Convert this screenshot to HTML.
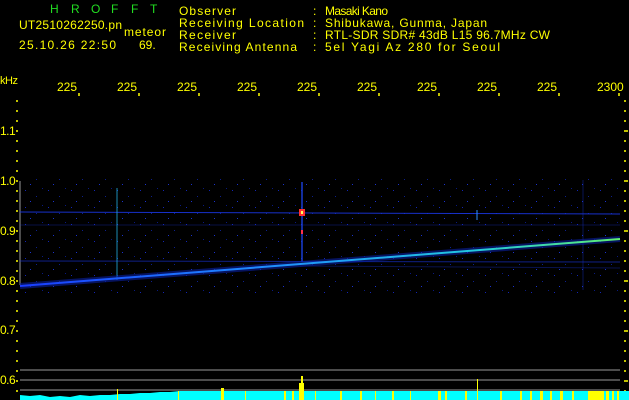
<!DOCTYPE html>
<html><head><meta charset="utf-8"><style>
html,body{margin:0;padding:0;background:#000;width:629px;height:400px;overflow:hidden}
svg{display:block}
text{font-family:"Liberation Sans","DejaVu Sans",sans-serif;font-size:12px}
.ax{font-size:11px;letter-spacing:-0.5px}
</style></head><body>
<svg width="629" height="400" viewBox="0 0 629 400">
<defs>
<linearGradient id="tr" x1="0" x2="1" y1="0" y2="0">
<stop offset="0" stop-color="#1a3cff"/><stop offset="0.4" stop-color="#1f8cff"/><stop offset="0.75" stop-color="#22c8e0"/><stop offset="1" stop-color="#60f070"/>
</linearGradient>
<pattern id="nz" width="23" height="17" patternUnits="userSpaceOnUse">
<rect x="2" y="3" width="1" height="1" fill="#1830e0"/><rect x="13" y="9" width="1" height="1" fill="#1028b0"/><rect x="7" y="14" width="1" height="1" fill="#2040ff"/><rect x="19" y="1" width="1" height="1" fill="#0c20a0"/>
</pattern>
</defs>
<rect width="629" height="400" fill="#000"/>
<g fill="#22dd22" font-size="14"><text x="50" y="13">H</text><text x="71" y="13">R</text><text x="91" y="13">O</text><text x="111" y="13">F</text><text x="131" y="13">F</text><text x="150" y="13">T</text></g>
<g fill="#ffff00">
<text x="19" y="29" textLength="103">UT2510262250.pn</text><text x="124" y="36" textLength="42">meteor</text>
<text x="19" y="49" textLength="97">25.10.26 22:50</text><text x="139" y="49">69.</text>
<text x="179" y="15" textLength="57">Observer</text><text x="179" y="27" textLength="125">Receiving Location</text><text x="179" y="39" textLength="57">Receiver</text><text x="179" y="51" textLength="118">Receiving Antenna</text>
<text x="313" y="15">:</text><text x="313" y="27">:</text><text x="313" y="39">:</text><text x="313" y="51">:</text>
<text x="325" y="15" textLength="63">Masaki Kano</text><text x="325" y="27" textLength="162">Shibukawa, Gunma, Japan</text><text x="325" y="39" textLength="225">RTL-SDR SDR# 43dB L15 96.7MHz CW</text><text x="325" y="51" textLength="175">5el Yagi Az 280 for Seoul</text>
<text x="0" y="84" class="ax">kHz</text>
<text x="57" y="91">225</text><text x="117" y="91">225</text><text x="177" y="91">225</text><text x="237" y="91">225</text><text x="297" y="91">225</text><text x="357" y="91">225</text><text x="417" y="91">225</text><text x="477" y="91">225</text><text x="537" y="91">225</text><text x="597" y="91">2300</text>
<g class="ax"><text x="0" y="135">1.1</text><text x="0" y="185">1.0</text><text x="0" y="235">0.9</text><text x="0" y="285">0.8</text><text x="0" y="334">0.7</text><text x="0" y="384">0.6</text></g>
</g>
<g stroke="#ffff00" stroke-width="1.5">
<path d="M79 93v3M139 93v3M199 93v3M259 93v3M319 93v3M379 93v3M439 93v3M499 93v3M559 93v3M619 93v3"/>
<path d="M16 101h2M16 111h2M16 121h2M16 131h2M16 141h2M16 151h2M16 161h2M16 171h2M16 181h2M16 191h2M16 201h2M16 211h2M16 221h2M16 231h2M16 241h2M16 251h2M16 261h2M16 271h2M16 281h2M16 291h2M16 301h2M16 311h2M16 321h2M16 331h2M16 341h2M16 351h2M16 361h2M16 371h2M16 381h2M16 391h2"/>
<path d="M624 101h2M624 111h2M624 121h2M624 131h4M624 141h2M624 151h2M624 161h2M624 171h2M624 181h4M624 191h2M624 201h2M624 211h2M624 221h2M624 231h4M624 241h2M624 251h2M624 261h2M624 271h2M624 281h4M624 291h2M624 301h2M624 311h2M624 321h2M624 331h4M624 341h2M624 351h2M624 361h2M624 371h2M624 381h4M624 391h2"/>
</g>
<line x1="20" y1="181" x2="20" y2="285" stroke="#999" stroke-width="1"/>
<rect x="20" y="175" width="600" height="120" fill="url(#nz)" opacity="0.8"/>
<g stroke="#1a36e0" stroke-width="1">
<line x1="20" y1="212" x2="620" y2="214" opacity="0.9"/>
<line x1="20" y1="225" x2="620" y2="225" opacity="0.3"/>
<line x1="20" y1="261" x2="620" y2="262" opacity="0.6"/>
<line x1="300" y1="266" x2="620" y2="268" opacity="0.35"/>
</g>
<line x1="117" y1="188" x2="117" y2="280" stroke="#22b0e0" stroke-width="1" opacity="0.8"/>
<line x1="302" y1="182" x2="302" y2="262" stroke="#1a40e0" stroke-width="2" opacity="0.7"/>
<line x1="583" y1="180" x2="583" y2="290" stroke="#1830d0" stroke-width="1" opacity="0.4"/>
<line x1="477" y1="210" x2="477" y2="220" stroke="#3090ff" stroke-width="1"/>
<rect x="299" y="209" width="6" height="7" fill="#ff3030"/>
<rect x="301" y="211" width="2" height="3" fill="#ffff60"/>
<rect x="301" y="230" width="2" height="4" fill="#ff3050"/>
<line x1="20" y1="286" x2="620" y2="239" stroke="#0a20a0" stroke-width="6" opacity="0.6"/>
<line x1="20" y1="286" x2="620" y2="239" stroke="url(#tr)" stroke-width="2"/>
<g stroke="#999" stroke-width="1"><line x1="20" y1="370" x2="620" y2="370"/><line x1="20" y1="380" x2="620" y2="380"/><line x1="20" y1="390" x2="620" y2="390"/></g>
<path d="M20 400V395l10 1 10-1 10 2 10-1 10 1 10-2 10 1 10 -1 10 0 10-1 10 0 10-1 10 0 10 -1 10 0 10 -1 10 0 10 0 10 0 10 0 10 0 10 0 10 0 10 0 10 0 10 0 10 0 10 0 10 0 10 0 10 0 10 0 10 0 10 0 10 0 10 0 10 0 10 0 10 0 10 0 10 0 10 0 10 0 10 0 10 0 10 0 10 0 10 0 10 0 10 0 10 0 10 0 10 0 10 0 10 0 10 0 10 0 10 0 10 0 10 0 10 0V400Z" fill="#00ffff"/>
<g fill="#ffff00">
<rect x="117" y="389" width="1" height="11"/><rect x="178" y="391" width="1" height="9"/><rect x="221" y="388" width="3" height="12"/><rect x="245" y="391" width="1" height="9"/>
<rect x="284" y="391" width="2" height="9"/><rect x="292" y="391" width="2" height="9"/><rect x="299" y="383" width="5" height="17"/><rect x="301" y="376" width="2" height="24"/>
<rect x="315" y="391" width="1" height="9"/><rect x="340" y="391" width="2" height="9"/><rect x="360" y="391" width="2" height="9"/><rect x="375" y="391" width="1" height="9"/><rect x="392" y="391" width="2" height="9"/><rect x="410" y="391" width="1" height="9"/><rect x="438" y="391" width="3" height="9"/><rect x="445" y="391" width="2" height="9"/><rect x="465" y="391" width="2" height="9"/><rect x="477" y="379" width="1" height="21"/><rect x="500" y="391" width="2" height="9"/><rect x="520" y="391" width="2" height="9"/>
<rect x="530" y="391" width="2" height="9"/><rect x="540" y="391" width="3" height="9"/><rect x="550" y="391" width="2" height="9"/><rect x="560" y="391" width="3" height="9"/><rect x="572" y="391" width="2" height="9"/><rect x="588" y="391" width="16" height="9"/><rect x="606" y="391" width="3" height="9"/><rect x="612" y="391" width="2" height="9"/><rect x="617" y="391" width="2" height="9"/>
</g>
</svg>
</body></html>
